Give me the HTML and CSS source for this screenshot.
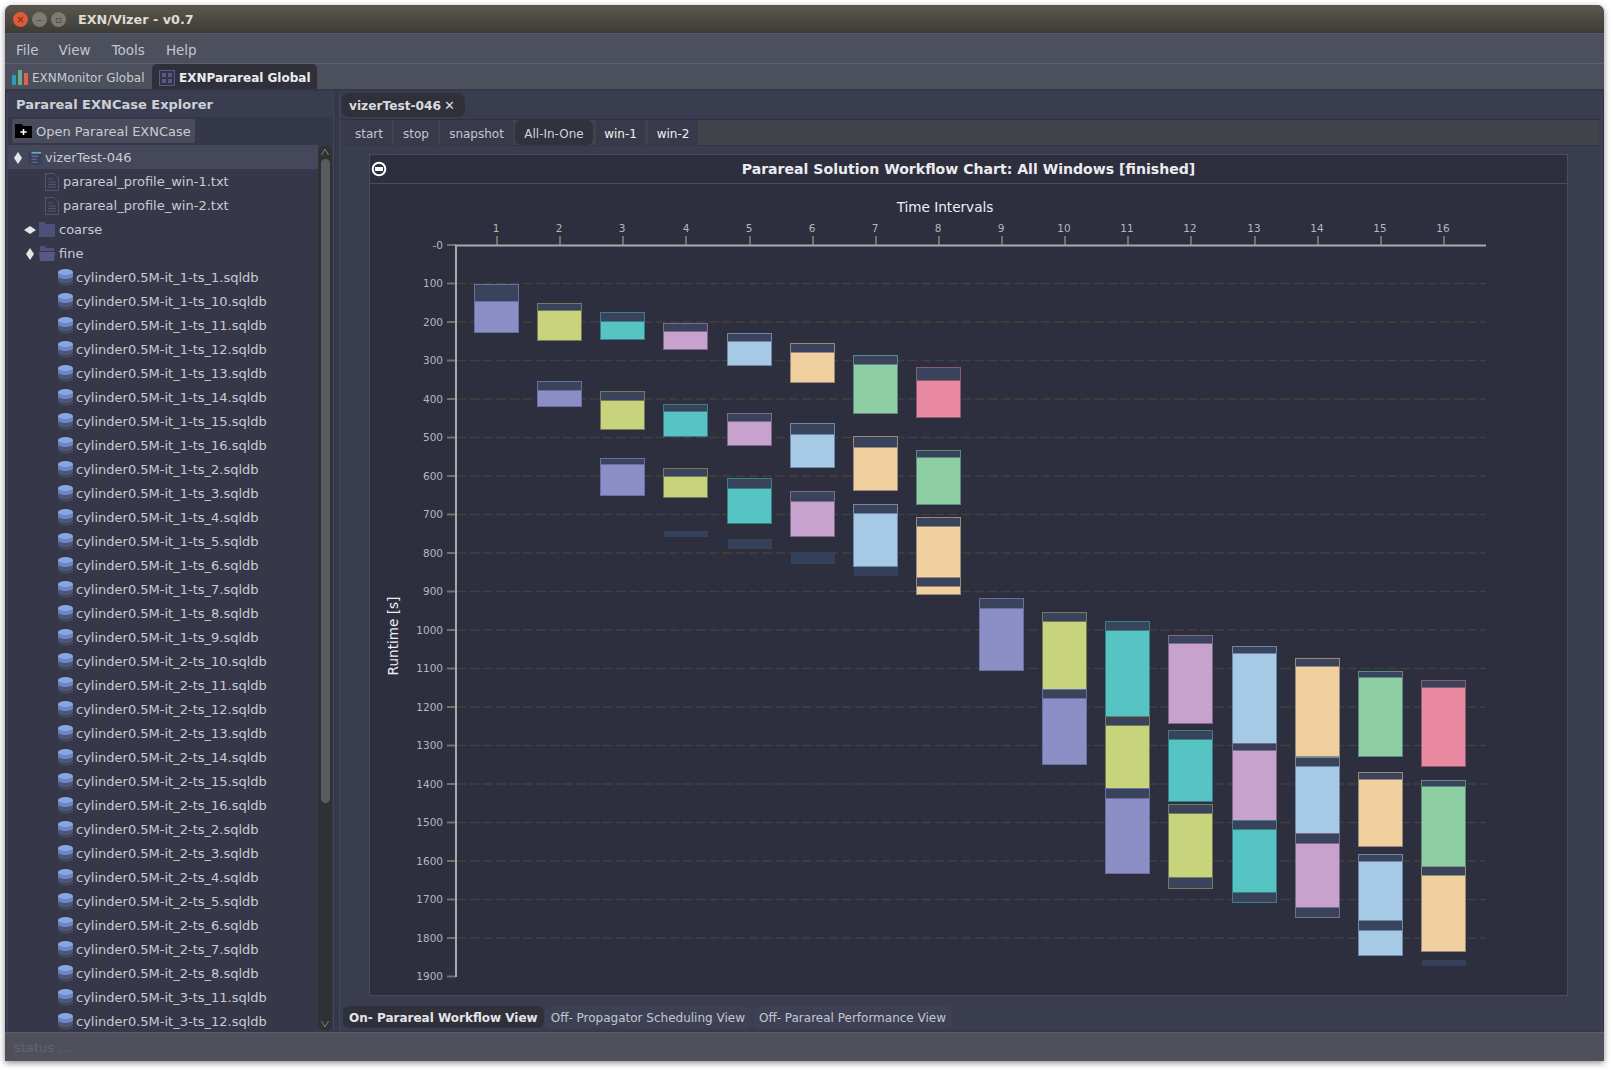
FILE: index.html
```html
<!DOCTYPE html>
<html lang="en">
<head>
<meta charset="utf-8">
<title>EXN/Vizer - v0.7</title>
<link rel="stylesheet" href="styles.css">
</head>
<body>
<svg class="defs" width="0" height="0" aria-hidden="true">
  <symbol id="i-db" viewBox="0 0 15 17">
    <path d="M0 11v3c0 1.600 3.400 3 7.500 3s7.500-1.400 7.500-3v-3z" fill="#41445a"/>
    <path d="M0 7v4c0 1.600 3.400 3 7.500 3s7.500-1.400 7.500-3V7z" fill="#50567a"/>
    <path d="M0 3v4c0 1.600 3.400 3 7.500 3S15 8.600 15 7V3z" fill="#6a86c4"/>
    <ellipse cx="7.500" cy="3" rx="7.500" ry="3" fill="#8aa6e0"/>
  </symbol>
  <symbol id="i-doc" viewBox="0 0 14 18">
    <path d="M.5.500h8.500l4.500 4.500v12.500H.5z" fill="none" stroke="#53566e"/>
    <path d="M3 6h5M3 9h8M3 11.500h8M3 14h8" stroke="#53566e"/>
  </symbol>
  <symbol id="i-diaV" viewBox="0 0 12 14"><path d="M6 1l4 6-4 6-4-6z" fill="#e6e6e6"/></symbol>
  <symbol id="i-diaH" viewBox="0 0 14 12"><path d="M1 6l6-4 6 4-6 4z" fill="#e6e6e6"/></symbol>
</svg>

<div class="window">
  <header class="titlebar">
    <span class="wbtn wclose">×</span>
    <span class="wbtn wmin">–</span>
    <span class="wbtn wmax">▫</span>
    <span class="wtitle">EXN/Vizer - v0.7</span>
  </header>

  <nav class="menubar">
    <span class="menu m-file">File</span>
    <span class="menu m-view">View</span>
    <span class="menu m-tools">Tools</span>
    <span class="menu m-help">Help</span>
  </nav>

  <div class="apptabs">
    <div class="apptab">
      <svg class="ico-bars" width="16" height="15" viewBox="0 0 16 15"><rect y="5" width="4" height="10" fill="#2e9db8"/><rect x="6" width="4" height="15" fill="#5fae8e"/><rect x="12" y="3" width="4" height="12" fill="#e0604c"/></svg>
      EXNMonitor Global
    </div>
    <div class="apptab apptab-on">
      <svg class="ico-grid" width="16" height="16" viewBox="0 0 16 16"><rect x=".5" y=".5" width="15" height="15" fill="#33344a" stroke="#565a90"/><rect x="3" y="3" width="4" height="4" fill="#565a80"/><rect x="9" y="3" width="4" height="4" fill="#565a80"/><rect x="3" y="9" width="4" height="4" fill="#565a80"/><rect x="9" y="9" width="4" height="4" fill="#565a80"/></svg>
      EXNParareal Global
    </div>
  </div>

  <main class="workspace">
    <aside class="explorer">
      <div class="explorer-head">Parareal EXNCase Explorer</div>
      <div class="explorer-tools">
        <button class="openbtn">
          <svg width="17" height="14" viewBox="0 0 16 14" preserveAspectRatio="none"><path d="M0 0h6l2 2h8v12H0z" fill="#000"/><path d="M8 5v6M5 8h6" stroke="#fff" stroke-width="1.500"/></svg>
          Open Parareal EXNCase
        </button>
      </div>
      <div class="treewrap">
        <div class="tree">
          <div class="row row-sel lv0">
            <svg class="dia" width="12" height="14"><use href="#i-diaV"/></svg>
            <svg class="ico-case" width="14" height="14" viewBox="0 0 16 16"><rect width="16" height="16" fill="#3b3f58"/><path d="M4 2h11" stroke="#5fb9ab" stroke-width="2"/><path d="M4 6h8M4 9.500h6M4 13h7" stroke="#5d6790" stroke-width="1.500"/></svg>
            <span>vizerTest-046</span>
          </div>
          <div class="row lv-file"><svg width="14" height="18"><use href="#i-doc"/></svg><span>parareal_profile_win-1.txt</span></div>
          <div class="row lv-file"><svg width="14" height="18"><use href="#i-doc"/></svg><span>parareal_profile_win-2.txt</span></div>
          <div class="row lv-dir">
            <svg class="dia" width="14" height="12"><use href="#i-diaH"/></svg>
            <svg width="16" height="15" viewBox="0 0 16 15"><path d="M0 0h5l2 2h9v13H0z" fill="#50517a"/></svg>
            <span>coarse</span>
          </div>
          <div class="row lv-dir">
            <svg class="dia dia-v" width="12" height="14"><use href="#i-diaV"/></svg>
            <svg width="16" height="15" viewBox="0 0 16 15"><path d="M1 0h5l1 2h8v3H1z" fill="#50517a"/><path d="M0 6h16l-1 9H1z" fill="#565885"/></svg>
            <span>fine</span>
          </div>
          <div class="row lv-db"><svg width="15" height="17"><use href="#i-db"/></svg><span>cylinder0.5M-it_1-ts_1.sqldb</span></div>
          <div class="row lv-db"><svg width="15" height="17"><use href="#i-db"/></svg><span>cylinder0.5M-it_1-ts_10.sqldb</span></div>
          <div class="row lv-db"><svg width="15" height="17"><use href="#i-db"/></svg><span>cylinder0.5M-it_1-ts_11.sqldb</span></div>
          <div class="row lv-db"><svg width="15" height="17"><use href="#i-db"/></svg><span>cylinder0.5M-it_1-ts_12.sqldb</span></div>
          <div class="row lv-db"><svg width="15" height="17"><use href="#i-db"/></svg><span>cylinder0.5M-it_1-ts_13.sqldb</span></div>
          <div class="row lv-db"><svg width="15" height="17"><use href="#i-db"/></svg><span>cylinder0.5M-it_1-ts_14.sqldb</span></div>
          <div class="row lv-db"><svg width="15" height="17"><use href="#i-db"/></svg><span>cylinder0.5M-it_1-ts_15.sqldb</span></div>
          <div class="row lv-db"><svg width="15" height="17"><use href="#i-db"/></svg><span>cylinder0.5M-it_1-ts_16.sqldb</span></div>
          <div class="row lv-db"><svg width="15" height="17"><use href="#i-db"/></svg><span>cylinder0.5M-it_1-ts_2.sqldb</span></div>
          <div class="row lv-db"><svg width="15" height="17"><use href="#i-db"/></svg><span>cylinder0.5M-it_1-ts_3.sqldb</span></div>
          <div class="row lv-db"><svg width="15" height="17"><use href="#i-db"/></svg><span>cylinder0.5M-it_1-ts_4.sqldb</span></div>
          <div class="row lv-db"><svg width="15" height="17"><use href="#i-db"/></svg><span>cylinder0.5M-it_1-ts_5.sqldb</span></div>
          <div class="row lv-db"><svg width="15" height="17"><use href="#i-db"/></svg><span>cylinder0.5M-it_1-ts_6.sqldb</span></div>
          <div class="row lv-db"><svg width="15" height="17"><use href="#i-db"/></svg><span>cylinder0.5M-it_1-ts_7.sqldb</span></div>
          <div class="row lv-db"><svg width="15" height="17"><use href="#i-db"/></svg><span>cylinder0.5M-it_1-ts_8.sqldb</span></div>
          <div class="row lv-db"><svg width="15" height="17"><use href="#i-db"/></svg><span>cylinder0.5M-it_1-ts_9.sqldb</span></div>
          <div class="row lv-db"><svg width="15" height="17"><use href="#i-db"/></svg><span>cylinder0.5M-it_2-ts_10.sqldb</span></div>
          <div class="row lv-db"><svg width="15" height="17"><use href="#i-db"/></svg><span>cylinder0.5M-it_2-ts_11.sqldb</span></div>
          <div class="row lv-db"><svg width="15" height="17"><use href="#i-db"/></svg><span>cylinder0.5M-it_2-ts_12.sqldb</span></div>
          <div class="row lv-db"><svg width="15" height="17"><use href="#i-db"/></svg><span>cylinder0.5M-it_2-ts_13.sqldb</span></div>
          <div class="row lv-db"><svg width="15" height="17"><use href="#i-db"/></svg><span>cylinder0.5M-it_2-ts_14.sqldb</span></div>
          <div class="row lv-db"><svg width="15" height="17"><use href="#i-db"/></svg><span>cylinder0.5M-it_2-ts_15.sqldb</span></div>
          <div class="row lv-db"><svg width="15" height="17"><use href="#i-db"/></svg><span>cylinder0.5M-it_2-ts_16.sqldb</span></div>
          <div class="row lv-db"><svg width="15" height="17"><use href="#i-db"/></svg><span>cylinder0.5M-it_2-ts_2.sqldb</span></div>
          <div class="row lv-db"><svg width="15" height="17"><use href="#i-db"/></svg><span>cylinder0.5M-it_2-ts_3.sqldb</span></div>
          <div class="row lv-db"><svg width="15" height="17"><use href="#i-db"/></svg><span>cylinder0.5M-it_2-ts_4.sqldb</span></div>
          <div class="row lv-db"><svg width="15" height="17"><use href="#i-db"/></svg><span>cylinder0.5M-it_2-ts_5.sqldb</span></div>
          <div class="row lv-db"><svg width="15" height="17"><use href="#i-db"/></svg><span>cylinder0.5M-it_2-ts_6.sqldb</span></div>
          <div class="row lv-db"><svg width="15" height="17"><use href="#i-db"/></svg><span>cylinder0.5M-it_2-ts_7.sqldb</span></div>
          <div class="row lv-db"><svg width="15" height="17"><use href="#i-db"/></svg><span>cylinder0.5M-it_2-ts_8.sqldb</span></div>
          <div class="row lv-db"><svg width="15" height="17"><use href="#i-db"/></svg><span>cylinder0.5M-it_3-ts_11.sqldb</span></div>
          <div class="row lv-db"><svg width="15" height="17"><use href="#i-db"/></svg><span>cylinder0.5M-it_3-ts_12.sqldb</span></div>
        </div>
        <div class="scrollbar">
          <svg class="sb-arrow" width="10" height="8" viewBox="0 0 10 8"><path d="M1.500 7L5 1l3.500 6" fill="none" stroke="#7d8186"/></svg>
          <div class="sb-thumb"></div>
          <svg class="sb-arrow sb-down" width="10" height="8" viewBox="0 0 10 8"><path d="M1.500 1L5 7l3.500-6" fill="none" stroke="#7d8186"/></svg>
        </div>
      </div>
    </aside>

    <section class="casepane">
      <div class="casetabs">
        <div class="casetab">vizerTest-046 <span class="x">✕</span></div>
      </div>
      <div class="toolstrip">
        <span class="tbtn t-start">start</span>
        <span class="tbtn t-stop">stop</span>
        <span class="tbtn t-snap">snapshot</span>
        <span class="tbtn tbtn-on t-all">All-In-One</span>
        <span class="tbtn tbtn-win t-w1">win-1</span>
        <span class="tbtn tbtn-win t-w2">win-2</span>
      </div>
      <div class="chartzone">
        <div class="chartcard">
          <div class="charthead">
            <svg class="collapse" width="16" height="16" viewBox="0 0 16 16"><circle cx="8" cy="8" r="6.300" fill="none" stroke="#fff" stroke-width="2"/><rect x="4" y="6" width="8" height="4" fill="#fff"/></svg>
            <span class="charttitle">Parareal Solution Workflow Chart: All Windows [finished]</span>
          </div>
          <svg class="chart" viewBox="370 184 1198 811" width="1198" height="811">
            <g class="grid">
              <path d="M456 283.500H1486M456 322H1486M456 360.500H1486M456 399H1486M456 437.500H1486M456 476H1486M456 514.500H1486M456 553H1486M456 591.500H1486M456 630H1486M456 668.500H1486M456 707H1486M456 745.500H1486M456 784H1486M456 822.500H1486M456 861H1486M456 899.500H1486M456 938H1486"/>
            </g>
            <g class="ticks">
              <path d="M447 245H456M447 283.500H456M447 322H456M447 360.500H456M447 399H456M447 437.500H456M447 476H456M447 514.500H456M447 553H456M447 591.500H456M447 630H456M447 668.500H456M447 707H456M447 745.500H456M447 784H456M447 822.500H456M447 861H456M447 899.500H456M447 938H456M447 976.500H456"/>
              <path d="M497 236V245M560 236V245M623 236V245M686 236V245M750 236V245M813 236V245M876 236V245M939 236V245M1002 236V245M1065 236V245M1128 236V245M1191 236V245M1255 236V245M1318 236V245M1381 236V245M1444 236V245"/>
            </g>
            <path class="axis" d="M456 977V245.500H1486"/>
            <g class="ylab">
              <text x="443" y="248.500">-0</text><text x="443" y="287">100</text><text x="443" y="325.500">200</text><text x="443" y="364">300</text><text x="443" y="402.500">400</text><text x="443" y="441">500</text><text x="443" y="479.500">600</text><text x="443" y="518">700</text><text x="443" y="556.500">800</text><text x="443" y="595">900</text><text x="443" y="633.500">1000</text><text x="443" y="672">1100</text><text x="443" y="710.500">1200</text><text x="443" y="749">1300</text><text x="443" y="787.500">1400</text><text x="443" y="826">1500</text><text x="443" y="864.500">1600</text><text x="443" y="903">1700</text><text x="443" y="941.500">1800</text><text x="443" y="980">1900</text>
            </g>
            <g class="xlab">
              <text x="496" y="232">1</text><text x="559" y="232">2</text><text x="622" y="232">3</text><text x="686" y="232">4</text><text x="749" y="232">5</text><text x="812" y="232">6</text><text x="875" y="232">7</text><text x="938" y="232">8</text><text x="1001" y="232">9</text><text x="1064" y="232">10</text><text x="1127" y="232">11</text><text x="1190" y="232">12</text><text x="1254" y="232">13</text><text x="1317" y="232">14</text><text x="1380" y="232">15</text><text x="1443" y="232">16</text>
            </g>
            <text class="axt" x="945" y="212" text-anchor="middle">Time Intervals</text>
            <text class="axt" transform="translate(398 636) rotate(-90)" text-anchor="middle">Runtime [s]</text>

            <g class="bars">
              <g class="violet"><rect class="h" x="474" y="285" height="17"/><rect class="b" x="474" y="302" height="31"/></g>
              <g class="yellow"><rect class="h" x="537" y="304" height="7"/><rect class="b" x="537" y="311" height="30"/></g>
              <g class="teal"><rect class="h" x="600" y="313" height="9"/><rect class="b" x="600" y="322" height="18"/></g>
              <g class="pink"><rect class="h" x="663" y="324" height="8"/><rect class="b" x="663" y="332" height="18"/></g>
              <g class="blue"><rect class="h" x="727" y="334" height="8"/><rect class="b" x="727" y="342" height="24"/></g>
              <g class="orange"><rect class="h" x="790" y="344" height="9"/><rect class="b" x="790" y="353" height="30"/></g>
              <g class="green"><rect class="h" x="853" y="356" height="9"/><rect class="b" x="853" y="365" height="49"/></g>
              <g class="red"><rect class="h" x="916" y="368" height="13"/><rect class="b" x="916" y="381" height="37"/></g>

              <g class="violet"><rect class="h" x="537" y="382" height="9"/><rect class="b" x="537" y="391" height="16"/></g>
              <g class="yellow"><rect class="h" x="600" y="392" height="9"/><rect class="b" x="600" y="401" height="29"/></g>
              <g class="teal"><rect class="h" x="663" y="405" height="7"/><rect class="b" x="663" y="412" height="25"/></g>
              <g class="pink"><rect class="h" x="727" y="414" height="8"/><rect class="b" x="727" y="422" height="24"/></g>
              <g class="blue"><rect class="h" x="790" y="424" height="11"/><rect class="b" x="790" y="435" height="33"/></g>
              <g class="orange"><rect class="h" x="853" y="437" height="11"/><rect class="b" x="853" y="448" height="43"/></g>
              <g class="green"><rect class="h" x="916" y="451" height="7"/><rect class="b" x="916" y="458" height="47"/></g>

              <g class="violet"><rect class="h" x="600" y="459" height="6"/><rect class="b" x="600" y="465" height="31"/></g>
              <g class="yellow"><rect class="h" x="663" y="469" height="8"/><rect class="b" x="663" y="477" height="21"/></g>
              <g class="teal"><rect class="h" x="727" y="479" height="10"/><rect class="b" x="727" y="489" height="35"/></g>
              <g class="pink"><rect class="h" x="790" y="492" height="10"/><rect class="b" x="790" y="502" height="35"/></g>
              <g class="blue"><rect class="h ghost" x="853" y="567" height="9"/><rect class="h" x="853" y="505" height="9"/><rect class="b" x="853" y="514" height="53"/></g>
              <g class="orange"><rect class="h" x="916" y="518" height="9"/><rect class="b" x="916" y="527" height="51"/><rect class="h" x="916" y="578" height="9"/><rect class="b" x="916" y="587" height="8"/></g>
              <g class="violet"><rect class="h ghost" x="663" y="531" height="6"/></g>
              <g class="yellow"><rect class="h ghost" x="727" y="539" height="10"/></g>
              <g class="teal"><rect class="h ghost" x="790" y="552" height="12"/></g>

              <g class="violet"><rect class="h" x="979" y="599" height="10"/><rect class="b" x="979" y="609" height="62"/></g>

              <g class="yellow"><rect class="h" x="1042" y="613" height="9"/><rect class="b" x="1042" y="622" height="68"/></g>
              <g class="violet"><rect class="h" x="1042" y="690" height="9"/><rect class="b" x="1042" y="699" height="66"/></g>

              <g class="teal"><rect class="h" x="1105" y="622" height="9"/><rect class="b" x="1105" y="631" height="86"/></g>
              <g class="yellow"><rect class="h" x="1105" y="717" height="9"/><rect class="b" x="1105" y="726" height="63"/></g>
              <g class="violet"><rect class="h" x="1105" y="789" height="10"/><rect class="b" x="1105" y="799" height="75"/></g>

              <g class="pink"><rect class="h" x="1168" y="636" height="8"/><rect class="b" x="1168" y="644" height="80"/></g>
              <g class="teal"><rect class="h" x="1168" y="731" height="9"/><rect class="b" x="1168" y="740" height="62"/></g>
              <g class="yellow"><rect class="h" x="1168" y="805" height="9"/><rect class="b" x="1168" y="814" height="64"/><rect class="h" x="1168" y="878" height="11"/></g>

              <g class="blue"><rect class="h" x="1232" y="647" height="7"/><rect class="b" x="1232" y="654" height="90"/></g>
              <g class="pink"><rect class="h" x="1232" y="744" height="7"/><rect class="b" x="1232" y="751" height="70"/></g>
              <g class="teal"><rect class="h" x="1232" y="821" height="9"/><rect class="b" x="1232" y="830" height="63"/><rect class="h" x="1232" y="893" height="10"/></g>

              <g class="orange"><rect class="h" x="1295" y="659" height="8"/><rect class="b" x="1295" y="667" height="90"/></g>
              <g class="blue"><rect class="h" x="1295" y="758" height="9"/><rect class="b" x="1295" y="767" height="67"/></g>
              <g class="pink"><rect class="h" x="1295" y="834" height="10"/><rect class="b" x="1295" y="844" height="64"/><rect class="h" x="1295" y="908" height="10"/></g>

              <g class="green"><rect class="h" x="1358" y="672" height="6"/><rect class="b" x="1358" y="678" height="79"/></g>
              <g class="orange"><rect class="h" x="1358" y="773" height="7"/><rect class="b" x="1358" y="780" height="67"/></g>
              <g class="blue"><rect class="h" x="1358" y="855" height="7"/><rect class="b" x="1358" y="862" height="59"/><rect class="h" x="1358" y="921" height="10"/><rect class="b" x="1358" y="931" height="25"/></g>

              <g class="red"><rect class="h" x="1421" y="681" height="7"/><rect class="b" x="1421" y="688" height="79"/></g>
              <g class="green"><rect class="h" x="1421" y="781" height="6"/><rect class="b" x="1421" y="787" height="80"/></g>
              <g class="orange"><rect class="h" x="1421" y="867" height="9"/><rect class="b" x="1421" y="876" height="76"/></g>
              <g class="blue"><rect class="h ghost" x="1421" y="960" height="6"/></g>
            </g>
          </svg>
        </div>
      </div>
      <div class="viewtabs">
        <span class="vtab vtab-on">On- Parareal Workflow View</span>
        <span class="vtab">Off- Propagator Scheduling View</span>
        <span class="vtab">Off- Parareal Performance View</span>
      </div>
    </section>
  </main>

  <footer class="statusbar">status ...</footer>
</div>
</body>
</html>
```
FILE: styles.css
```css
* { box-sizing: border-box; }
html, body { margin: 0; height: 100%; }
body {
  background: #fff;
  padding: 5px 9px 9px 5px;
  font-family: "DejaVu Sans", sans-serif;
  font-size: 13px;
  color: #c9cbd3;
  overflow: hidden;
}
.defs { position: absolute; }
.window {
  height: 1056px;
  display: flex;
  flex-direction: column;
  background: #3a3c4b;
  box-shadow: 0 2px 6px rgba(0,0,0,.45);
  border-radius: 7px 7px 0 0;
}

/* title bar */
.titlebar {
  height: 28px;
  flex: none;
  display: flex;
  align-items: center;
  padding: 1px 0 0 8px;
  background: linear-gradient(#5b574e, #3d3c37);
  border-radius: 7px 7px 0 0;
}
.wbtn {
  width: 15px; height: 15px;
  margin-right: 4px;
  border-radius: 50%;
  display: flex;
  align-items: center;
  justify-content: center;
  font-size: 10px;
  line-height: 1;
  color: #44423d;
  background: #7b7a74;
}
.wclose { background: #e0593a; color: #7a2a14; }
.wtitle {
  margin-left: 8px;
  font-weight: bold;
  font-size: 12.800px;
  color: #dfdbd2;
}

/* menu */
.menubar {
  height: 31px;
  flex: none;
  display: flex;
  align-items: center;
  padding-top: 2px;
  background: #4c4f5c;
  border-top: 1px solid #55586a;
  border-bottom: 1px solid #5c5f6b;
}
.menu { color: #c4c6cc; font-size: 13.500px; }
.m-file { margin-left: 11px; }
.m-view { margin-left: 20px; }
.m-tools { margin-left: 21px; }
.m-help { margin-left: 21px; }

/* application tabs */
.apptabs {
  height: 25px;
  flex: none;
  display: flex;
  align-items: stretch;
  background: #4c4f5c;
}
.apptab {
  width: 146px;
  display: flex;
  align-items: center;
  gap: 4px;
  padding: 2px 0 0 7px;
  border-radius: 5px 5px 0 0;
  font-size: 12px;
  color: #c9cbd3;
  white-space: nowrap;
}
.apptab svg { flex: none; }
.apptab-on {
  width: 165px;
  margin-left: 1px;
  gap: 4px;
  background: #2f3039;
  color: #ececef;
  font-weight: bold;
}

/* workspace */
.workspace {
  flex: 1;
  min-height: 0;
  display: flex;
  padding: 2px 2px 1px 2px;
  gap: 5px;
  background: #35374a;
  border-bottom: 1px solid #5a5c68;
}

/* explorer */
.explorer {
  width: 327px;
  flex: none;
  display: flex;
  flex-direction: column;
  min-height: 0;
  background: #3a3d4f;
  border-left: 1px solid #44465a;
  border-right: 1px solid #44465a;
  border-radius: 4px 4px 0 0;
}
.explorer-head {
  height: 26px;
  flex: none;
  display: flex;
  align-items: center;
  padding-left: 8px;
  font-weight: bold;
  font-size: 13px;
  color: #ced0d6;
}
.explorer-tools {
  height: 28px;
  flex: none;
  display: flex;
  align-items: center;
  padding-left: 4px;
  background: #35374a;
}
.openbtn {
  height: 24px;
  width: 183px;
  display: flex;
  align-items: center;
  gap: 4px;
  padding: 0 0 0 3px;
  border: 0;
  border-radius: 3px;
  background: #4a4c5b;
  color: #c9cbd3;
  font-family: inherit;
  font-size: 13px;
  white-space: nowrap;
}
.openbtn svg { flex: none; }
.treewrap {
  flex: 1;
  min-height: 0;
  display: flex;
  background: #363849;
}
.tree { flex: 1; min-width: 0; overflow: hidden; }
.row {
  height: 24px;
  display: flex;
  align-items: center;
  white-space: nowrap;
  font-size: 13px;
  padding-top: 1px;
}
.row svg { flex: none; }
.row-sel { background: #45475a; }
.lv0 { padding-left: 4px; gap: 4px; }
.lv0 span { margin-left: -1px; }
.lv-file { padding-left: 37px; gap: 4px; }
.lv-dir { padding-left: 15px; }
.lv-dir .dia { margin-right: 2px; }
.lv-dir .dia-v { margin-left: 1px; margin-right: 3px; }
.lv-dir span { margin-left: 4px; }
.lv-db { padding-left: 50px; gap: 3px; }
.scrollbar {
  width: 14px;
  flex: none;
  position: relative;
  margin-right: 1px;
  display: flex;
  flex-direction: column;
  align-items: center;
  background: #2f3133;
  border-radius: 7px;
}
.sb-arrow { flex: none; margin-top: 3px; }
.sb-thumb {
  width: 9px;
  height: 644px;
  margin-top: 3px;
  background: #585c60;
  border-radius: 5px;
}
.sb-down { margin-top: auto; margin-bottom: 3px; }

/* case pane */
.casepane {
  flex: 1;
  min-width: 0;
  display: flex;
  flex-direction: column;
  background: #3a3d4f;
  border-left: 1px solid #44465a;
  border-right: 1px solid #44465a;
  border-radius: 4px 4px 0 0;
}
.casetabs {
  height: 29px;
  flex: none;
  padding: 2px 0 0 2px;
  border-bottom: 1px solid #2f3040;
}
.casetab {
  display: inline-flex;
  align-items: center;
  gap: 3px;
  height: 24px;
  width: 123px;
  padding: 1px 0 0 7px;
  background: #2f3039;
  border-radius: 7px;
  font-weight: bold;
  font-size: 12.200px;
  color: #d9dade;
  white-space: nowrap;
}
.x { font-weight: normal; font-size: 13px; }
.toolstrip {
  height: 26px;
  flex: none;
  display: flex;
  align-items: stretch;
  margin: 0 2px 0 4px;
  background: #42424b;
  border-bottom: 1px solid #34354a;
}
.tbtn {
  display: flex;
  align-items: center;
  justify-content: center;
  padding-top: 2px;
  background: #383a4c;
  font-size: 12px;
  color: #c5c7ce;
  margin-right: 2px;
  white-space: nowrap;
}
.t-start { width: 48px; padding-left: 2px; }
.t-stop { width: 44px; }
.t-snap { width: 73px; }
.t-all { width: 78px; margin-right: 3px; }
.t-w1 { width: 49px; margin-right: 3px; }
.t-w2 { width: 50px; }
.tbtn-on { background: #30323e; border-radius: 6px; color: #d2d4da; }
.tbtn-win { color: #f2f4ee; }

.chartzone {
  flex: 1;
  min-height: 0;
  padding: 8px 33px 8px 29px;
}
.chartcard {
  height: 100%;
  display: flex;
  flex-direction: column;
  background: #2d2e3e;
  border: 1px solid #4a4c5c;
}
.charthead {
  height: 29px;
  flex: none;
  position: relative;
  display: flex;
  align-items: center;
  justify-content: center;
  border-bottom: 1px solid #4a4c5c;
}
.collapse { position: absolute; left: 1px; top: 6px; }
.charttitle { font-weight: bold; font-size: 14.080px; color: #ececef; }
.chart { display: block; flex: none; }

.grid path { fill: none; stroke: #41423c; stroke-width: 1.500; stroke-dasharray: 10 3.300; }
.ticks path { fill: none; stroke: #6f7070; stroke-width: 2; }
.axis { fill: none; stroke: #a9a9a9; stroke-width: 2; }
.ylab text, .xlab text { font-size: 10.500px; fill: #b6b7bc; }
.ylab text { text-anchor: end; }
.xlab text { text-anchor: middle; }
.axt { font-size: 13.600px; fill: #eceef2; }

.bars { transform: translate(.5px, -.5px); shape-rendering: crispEdges; }
.bars rect { width: 44px; stroke-width: 1; }
.bars .h { fill: #39445c; }
.bars .ghost { stroke: none; fill: #35405a; }
.violet .b { fill: #8b8fc6; } .violet rect { stroke: #6a6ea3; }
.yellow .b { fill: #c8d47c; } .yellow rect { stroke: #767b60; }
.teal .b { fill: #57c4c4; } .teal rect { stroke: #3a7f88; }
.pink .b { fill: #c6a2cc; } .pink rect { stroke: #7f6a8e; }
.blue .b { fill: #a6c9e6; } .blue rect { stroke: #6d88a8; }
.orange .b { fill: #f1d0a0; } .orange rect { stroke: #98897a; }
.green .b { fill: #8dcfa2; } .green rect { stroke: #5c8a80; }
.red .b { fill: #e989a2; } .red rect { stroke: #8d5a72; }

/* view tabs */
.viewtabs {
  height: 27px;
  flex: none;
  display: flex;
  align-items: flex-start;
  padding: 2px 0 0 3px;
}
.vtab {
  height: 22px;
  display: flex;
  align-items: center;
  padding: 1px 6px 0;
  margin-right: 2px;
  background: #3e4156;
  border-radius: 6px;
  font-size: 12px;
  color: #c5c7ce;
  white-space: nowrap;
}
.vtab-on { background: #2f3039; font-weight: bold; color: #e4e5e9; margin-right: 1px; }

/* status */
.statusbar {
  height: 28px;
  flex: none;
  display: flex;
  align-items: center;
  padding-left: 9px;
  background: #4f505c;
  color: #62646f;
  font-size: 13px;
}
```
